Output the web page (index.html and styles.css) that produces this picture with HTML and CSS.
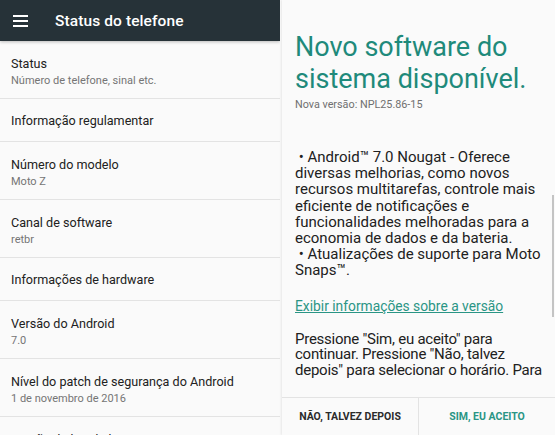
FILE: index.html
```html
<!DOCTYPE html>
<html lang="pt-BR">
<head>
<meta charset="utf-8">
<title>Status do telefone</title>
<link rel="stylesheet" href="styles.css">
</head>
<body>
<div class="screen">
  <section class="settings">
    <header class="appbar">
      <svg class="menu" width="15" height="12" viewBox="0 0 15 12"><rect x="0" y="0" width="15" height="2"/><rect x="0" y="5" width="15" height="2"/><rect x="0" y="10" width="15" height="2"/></svg>
      <h1 class="appbar-title">Status do telefone</h1>
    </header>
    <ul class="list">
      <li class="row"><div class="row-title">Status</div><div class="row-sub">Número de telefone, sinal etc.</div></li>
      <li class="row single"><div class="row-title">Informação regulamentar</div></li>
      <li class="row"><div class="row-title">Número do modelo</div><div class="row-sub">Moto Z</div></li>
      <li class="row"><div class="row-title">Canal de software</div><div class="row-sub">retbr</div></li>
      <li class="row single"><div class="row-title">Informações de hardware</div></li>
      <li class="row"><div class="row-title">Versão do Android</div><div class="row-sub">7.0</div></li>
      <li class="row"><div class="row-title">Nível do patch de segurança do Android</div><div class="row-sub">1 de novembro de 2016</div></li>
      <li class="row"><div class="row-title">Versão da banda base</div><div class="row-sub">M8996_1255331.29.01.88.02R</div></li>
    </ul>
  </section>
  <section class="update">
    <div class="update-body">
      <h2 class="update-title">Novo software do sistema disponível.</h2>
      <p class="version">Nova versão: NPL25.86-15</p>
      <p class="notes">&nbsp;• Android™ 7.0 Nougat - Oferece diversas melhorias, como novos recursos multitarefas, controle mais eficiente de notificações e funcionalidades melhoradas para a economia de dados e da bateria.<br>&nbsp;• Atualizações de suporte para Moto Snaps™.</p>
      <a class="link" href="#">Exibir informações sobre a versão</a>
      <p class="notes press">Pressione "Sim, eu aceito" para continuar. Pressione "Não, talvez depois" para selecionar o horário. Para</p>
    </div>
    <div class="scrollbar"></div>
    <div class="actions">
      <button class="btn later">NÃO, TALVEZ DEPOIS</button>
      <button class="btn accept">SIM, EU ACEITO</button>
    </div>
  </section>
</div>
</body>
</html>
```
FILE: styles.css
```css
* { box-sizing: border-box; }
html, body { margin: 0; padding: 0; }
body {
  width: 555px;
  height: 435px;
  overflow: hidden;
  background: #fafafa;
  font-family: Roboto, "Liberation Sans", sans-serif;
}
.screen {
  display: flex;
  width: 555px;
  height: 435px;
}
.settings {
  width: 280px;
  flex: none;
  background: #fafafa;
  overflow: hidden;
}
.appbar {
  height: 41px;
  background: #263238;
  display: flex;
  align-items: center;
  padding-left: 13px;
  box-shadow: 0 1px 3px rgba(0,0,0,0.25);
  position: relative;
  z-index: 1;
}
.menu { fill: #ffffff; flex: none; }
.appbar-title {
  margin: 0 0 0 27px;
  color: #ffffff;
  font-size: 15.5px;
  font-weight: 500;
  letter-spacing: 0.1px;
}
.list { list-style: none; margin: 0; padding: 0; }
.row {
  padding: 13px 11px 0;
  border-bottom: 1px solid #e3e3e3;
  height: 58px;
}
.row.single { height: 43px; padding-top: 12px; }
.row-title {
  font-size: 12.6px;
  line-height: 19px;
  color: #212121;
}
.row-sub {
  font-size: 11px;
  line-height: 15px;
  color: #757575;
}
.update {
  flex: 1;
  display: flex;
  flex-direction: column;
  background: #fafafa;
  margin-left: 2px;
  box-shadow: -1px 0 2px rgba(0,0,0,0.08);
  position: relative;
}
.update-body {
  flex: 1;
  overflow: hidden;
  padding: 31px 4px 0 13px;
  max-height: 383px;
}
.update-title {
  margin: 0;
  font-size: 27px;
  line-height: 32px;
  font-weight: 400;
  color: #1f8a7b;
}
.version {
  margin: 3px 0 0;
  font-size: 10.8px;
  line-height: 14px;
  color: #6f6f6f;
}
.notes {
  margin: 37px 0 0;
  font-size: 15px;
  line-height: 16.2px;
  color: #212121;
}
.link {
  display: block;
  margin-top: 19px;
  font-size: 13.8px;
  line-height: 16px;
  color: #2a9585;
  text-decoration: underline;
}
.notes.press {
  margin-top: 18px;
  line-height: 15.5px;
  letter-spacing: -0.25px;
}
.scrollbar {
  position: absolute;
  right: 1px;
  top: 195px;
  width: 2px;
  height: 122px;
  background: #c4c4c4;
}
.actions {
  height: 38px;
  margin-top: auto;
  border-top: 1px solid #e3e3e3;
  display: flex;
}
.btn {
  flex: 1;
  border: 0;
  background: transparent;
  font-family: Roboto, "Liberation Sans", sans-serif;
  font-size: 10.5px;
  font-weight: 700;
  padding: 0;
}
.later { color: #2b2b2b; border-right: 1px solid #e3e3e3; }
.accept { color: #2a9585; }
```
